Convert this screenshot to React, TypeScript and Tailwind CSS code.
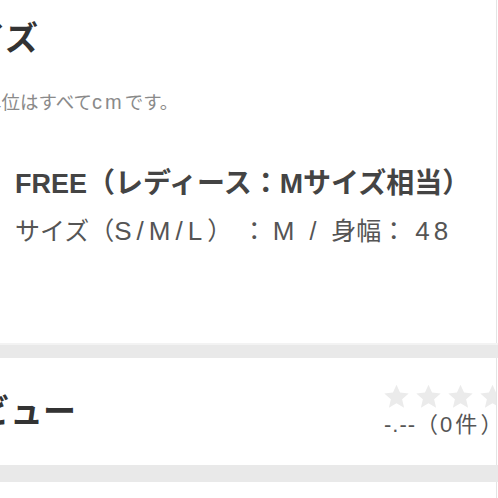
const font = '[font-family:"Liberation_Sans","Noto_Sans_CJK_JP",sans-serif]';

function Star() {
  return (
    <svg viewBox="0 0 24 24" className="w-[25px] h-[25px] shrink-0" fill="#ebebeb">
      <path d="M12 0.6l3.4 7.6 8.3.8-6.3 5.6 1.9 8.2L12 18.5l-7.3 4.3 1.9-8.2L.3 9l8.3-.8z" />
    </svg>
  );
}

export default function App() {
  return (
    <div className={`w-[498px] h-[498px] overflow-hidden bg-white flex flex-col ${font}`}>
      {/* size section */}
      <div className="h-[343px] shrink-0 bg-white border-r border-[#e4e4e4] w-[497px] overflow-hidden">
        <h2 className="ml-[-60px] pt-[15px] text-[33px] leading-[48px] font-bold text-[#333] whitespace-nowrap">
          サイズ
        </h2>
        <p className="ml-[-17px] mt-[26px] text-[18.5px] leading-[26px] text-[#8a8a8a] whitespace-nowrap">
          単位はすべて<span className="text-[20px] tracking-[3px]">cm</span>です。
        </p>
        <div className="pl-[15px] mt-[44px]">
          <p className="text-[28px] leading-[47px] font-bold text-[#444] whitespace-nowrap">
            <span className="text-[27px]">FREE</span>（レディース：Mサイズ相当）
          </p>
          <p className="text-[25px] leading-[47px] text-[#555] whitespace-nowrap">
            サイズ（<span className="text-[26px] tracking-[5px]">S/M/L</span>）
            <span className="ml-[22px]">：</span>
            <span className="ml-[6px] text-[26px]">M</span>
            <span className="mx-[15px]">/</span>
            身幅：
            <span className="ml-[9px] text-[26px] tracking-[4px]">48</span>
          </p>
        </div>
      </div>

      <div className="h-[15px] shrink-0 bg-[#e9e9e9] border-t-2 border-[#f3f3f3]" />

      {/* review section */}
      <div className="h-[107px] shrink-0 bg-white border-r border-[#e4e4e4] w-[497px] overflow-hidden flex items-center justify-between">
        <h2 className="ml-[-56px] text-[33px] leading-[48px] font-bold text-[#333] whitespace-nowrap">
          レビュー
        </h2>
        <div className="w-[112px] shrink-0 flex flex-col">
          <div className="flex gap-[7px] whitespace-nowrap">
            <Star />
            <Star />
            <Star />
            <Star />
            <Star />
          </div>
          <p className="mt-[2px] text-[22px] leading-[28px] text-[#555] whitespace-nowrap">
            <span className="tracking-[1px]">-.--</span>（<span className="px-[2px]">0</span>
            <span className="ml-[1px]">件</span>
            <span className="ml-[3px]">）</span>
          </p>
        </div>
      </div>

      <div className="h-[17px] shrink-0 bg-[#e9e9e9]" />

      <div className="flex-1 bg-white rounded-tl-[5px] ml-[1px] border-r border-[#e4e4e4] w-[496px]" />
    </div>
  );
}
